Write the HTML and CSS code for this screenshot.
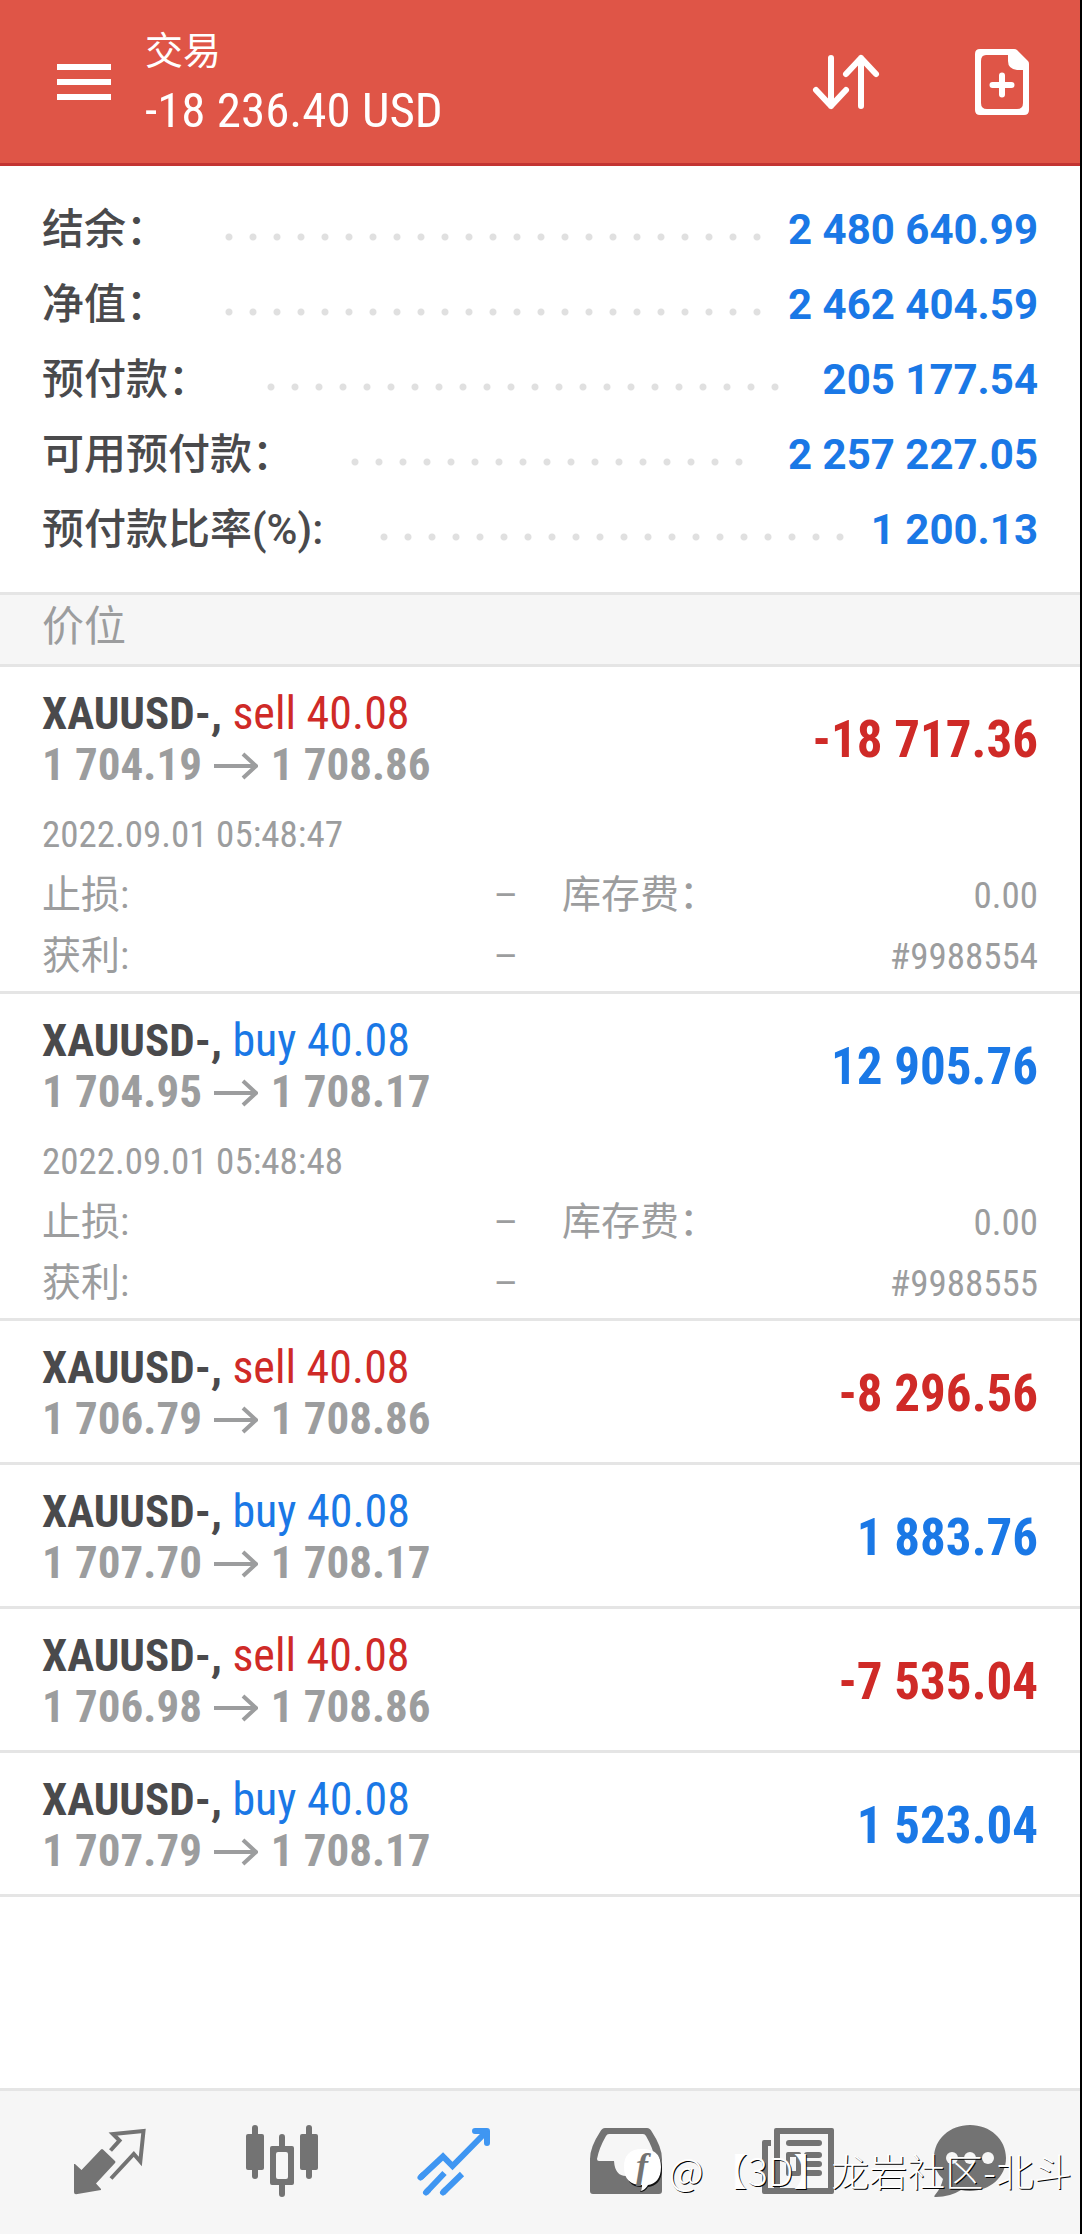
FILE: index.html
```html
<!DOCTYPE html>
<html lang="zh-CN">
<head>
<meta charset="utf-8">
<meta name="viewport" content="width=device-width, initial-scale=1">
<title>交易</title>
<link rel="stylesheet" href="styles.css">
</head>
<body>
<div class="app">
  <header class="topbar">
    <button class="icon-button menu-button" type="button" aria-label="菜单">
      <svg width="54" height="54" viewBox="0 0 54 54"><path d="M0 12h54M0 27h54M0 42h54" stroke="currentColor" stroke-width="6"/></svg>
    </button>
    <div class="heading">
      <h1 class="heading-title">交易</h1>
      <p class="heading-balance">-18 236.40 USD</p>
    </div>
    <button class="icon-button" type="button" aria-label="排序">
      <svg width="72" height="72" viewBox="0 0 72 72" fill="none" stroke="currentColor" stroke-width="6" stroke-linecap="round" stroke-linejoin="round"><path d="M21 12v48M6 44l15 16 15-16M51 60V12M36 28l15-16 15 16"/></svg>
    </button>
    <button class="icon-button" type="button" aria-label="新订单">
      <svg width="54" height="72" viewBox="0 0 54 72"><path fill="currentColor" fill-rule="evenodd" d="M5 3h34q2 0 3 1l11 11q1 1 1 3v46q0 5-5 5H5q-5 0-5-5V8q0-5 5-5zm6 6q-5 0-5 6v42q0 6 6 6h30q6 0 6-6V24h-6q-9-1-9-9V9z"/><path d="M27 29.500v19M17.500 39h19" stroke="currentColor" stroke-width="6" stroke-linecap="round"/></svg>
    </button>
  </header>

  <main class="content">
    <dl class="summary">
      <div class="summary-row"><dt>结余&#xFF1A;</dt><dd class="dots"></dd><dd class="summary-value">2 480 640.99</dd></div>
      <div class="summary-row"><dt>净值&#xFF1A;</dt><dd class="dots"></dd><dd class="summary-value">2 462 404.59</dd></div>
      <div class="summary-row"><dt>预付款&#xFF1A;</dt><dd class="dots"></dd><dd class="summary-value">205 177.54</dd></div>
      <div class="summary-row"><dt>可用预付款&#xFF1A;</dt><dd class="dots"></dd><dd class="summary-value">2 257 227.05</dd></div>
      <div class="summary-row"><dt>预付款比率(%):</dt><dd class="dots"></dd><dd class="summary-value">1 200.13</dd></div>
    </dl>

    <h2 class="section-title">价位</h2>

    <ul class="positions">
      <li class="position">
        <div class="position-main">
          <div>
            <p class="deal">XAUUSD-, <span class="side sell">sell 40.08</span></p>
            <p class="prices">1 704.19 <svg class="arrow" viewBox="0 0 44 28"><path d="M0 14h42M29 2l13 12-13 12"/></svg> 1 708.86</p>
          </div>
          <p class="profit sell">-18 717.36</p>
        </div>
        <div class="details">
          <p class="time">2022.09.01 05:48:47</p>
          <dl class="detail-grid">
            <div class="detail"><dt>止损:</dt><dd class="empty">–</dd></div>
            <div class="detail"><dt>库存费&#xFF1A;</dt><dd>0.00</dd></div>
            <div class="detail"><dt>获利:</dt><dd class="empty">–</dd></div>
            <div class="detail"><dt></dt><dd>#9988554</dd></div>
          </dl>
        </div>
      </li>
      <li class="position">
        <div class="position-main">
          <div>
            <p class="deal">XAUUSD-, <span class="side buy">buy 40.08</span></p>
            <p class="prices">1 704.95 <svg class="arrow" viewBox="0 0 44 28"><path d="M0 14h42M29 2l13 12-13 12"/></svg> 1 708.17</p>
          </div>
          <p class="profit buy">12 905.76</p>
        </div>
        <div class="details">
          <p class="time">2022.09.01 05:48:48</p>
          <dl class="detail-grid">
            <div class="detail"><dt>止损:</dt><dd class="empty">–</dd></div>
            <div class="detail"><dt>库存费&#xFF1A;</dt><dd>0.00</dd></div>
            <div class="detail"><dt>获利:</dt><dd class="empty">–</dd></div>
            <div class="detail"><dt></dt><dd>#9988555</dd></div>
          </dl>
        </div>
      </li>
      <li class="position">
        <div class="position-main">
          <div>
            <p class="deal">XAUUSD-, <span class="side sell">sell 40.08</span></p>
            <p class="prices">1 706.79 <svg class="arrow" viewBox="0 0 44 28"><path d="M0 14h42M29 2l13 12-13 12"/></svg> 1 708.86</p>
          </div>
          <p class="profit sell">-8 296.56</p>
        </div>
      </li>
      <li class="position">
        <div class="position-main">
          <div>
            <p class="deal">XAUUSD-, <span class="side buy">buy 40.08</span></p>
            <p class="prices">1 707.70 <svg class="arrow" viewBox="0 0 44 28"><path d="M0 14h42M29 2l13 12-13 12"/></svg> 1 708.17</p>
          </div>
          <p class="profit buy">1 883.76</p>
        </div>
      </li>
      <li class="position">
        <div class="position-main">
          <div>
            <p class="deal">XAUUSD-, <span class="side sell">sell 40.08</span></p>
            <p class="prices">1 706.98 <svg class="arrow" viewBox="0 0 44 28"><path d="M0 14h42M29 2l13 12-13 12"/></svg> 1 708.86</p>
          </div>
          <p class="profit sell">-7 535.04</p>
        </div>
      </li>
      <li class="position">
        <div class="position-main">
          <div>
            <p class="deal">XAUUSD-, <span class="side buy">buy 40.08</span></p>
            <p class="prices">1 707.79 <svg class="arrow" viewBox="0 0 44 28"><path d="M0 14h42M29 2l13 12-13 12"/></svg> 1 708.17</p>
          </div>
          <p class="profit buy">1 523.04</p>
        </div>
      </li>
    </ul>
  </main>

  <nav class="tabs">
    <a class="tab" href="#quotes" aria-label="行情">
      <svg width="80" height="80" viewBox="0 0 80 80"><path fill="none" stroke="currentColor" stroke-width="4" d="M40.500 30.500l9-10L43 14l30.500-3-3.200 30.500-6.500-7.500L41 58.500"/><path fill="currentColor" d="M31 29.500q1-1 2 0L45 41q1 1 0 2L26 63.500l5 5.500v1L6 74.300q-2 0-2-2V44h1l6.500 6z"/></svg>
    </a>
    <a class="tab" href="#chart" aria-label="图表">
      <svg width="80" height="80" viewBox="0 0 80 80" fill="currentColor"><rect x="4" y="14" width="18" height="36" rx="2"/><rect x="10" y="5" width="6" height="54" rx="3"/><rect x="58" y="14" width="18" height="36" rx="2"/><rect x="64" y="5" width="6" height="54" rx="3"/><path d="M37 26h6v-9q0-3-3-3t-3 3zM37 65h6v9q0 3-3 3t-3-3z"/><path fill-rule="evenodd" d="M30 26h20q2 0 2 2v35q0 2-2 2H30q-2 0-2-2V28q0-2 2-2zm6 6q-2 0-2 2v23q0 2 2 2h8q2 0 2-2V34q0-2-2-2z"/></svg>
    </a>
    <a class="tab tab-active" href="#trade" aria-label="交易" aria-current="page">
      <svg width="80" height="80" viewBox="0 0 80 80" fill="none" stroke="currentColor" stroke-width="6"><path stroke-linecap="round" stroke-linejoin="round" d="M61 11h12v12"/><path stroke-linejoin="miter" d="M6.500 57.500L29 36.500l9.500 9.500L73 11"/><path stroke-linecap="round" d="M6.500 57.500l2-2M12 72.500l2-2M29 72.500l2-2"/><path d="M12 72.500L30.500 53M29 72.500L48 54"/></svg>
    </a>
    <a class="tab" href="#history" aria-label="历史">
      <svg width="80" height="80" viewBox="0 0 80 80"><path fill="currentColor" fill-rule="evenodd" d="M19 8h42q3 0 5 4 10 15 10 27v32q0 3-3 3H7q-3 0-3-3V39Q4 27 14 12q2-4 5-4zm4 6q-2 0-3 2-7 12-9 23 0 2 2 2h15q1 15 12 15t12-15h15q2 0 2-2-2-11-9-23-1-2-3-2z"/></svg>
    </a>
    <a class="tab" href="#news" aria-label="新闻">
      <svg width="80" height="80" viewBox="0 0 80 80" fill="currentColor"><path fill-rule="evenodd" d="M18 8h56q2 0 2 2v62q0 2-2 2H6q-2 0-2-2V22q0-2 2-2h7v6h-3v42h6V10q0-2 2-2zm4 6v54h48V14z"/><rect x="28" y="20" width="36" height="6" rx="3"/><path fill-rule="evenodd" d="M30 32h11q2 0 2 2v20q0 2-2 2H30q-2 0-2-2V34q0-2 2-2zm2 5v14h6V37z"/><rect x="46" y="32" width="18" height="6" rx="3"/><rect x="46" y="41" width="18" height="6" rx="3"/><rect x="46" y="50" width="18" height="6" rx="3"/></svg>
    </a>
    <a class="tab" href="#messages" aria-label="消息">
      <svg width="80" height="80" viewBox="0 0 80 80"><path fill="currentColor" d="M40 5c20 0 36 14 36 33S60 71 40 71q-5 0-9-1-11 7-25 7-3 0-1-2 6-7 8-16Q4 51 4 38C4 19 20 5 40 5z"/><g fill="#f6f6f6"><circle cx="22" cy="38" r="6"/><circle cx="40" cy="38" r="6"/><circle cx="58" cy="38" r="6"/></g></svg>
    </a>
  </nav>

  <div class="watermark">
    <svg class="watermark-logo" width="40" height="44" viewBox="0 0 40 44"><path fill="#111" d="M20 3c14 0 19 7 19 18 0 12-6 17-14 18q-3 5-8 5 2-2 2-5C8 39 3 33 3 21 3 10 8 3 20 3z"/><path fill="#fff" d="M19 1c14 0 19 7 19 18 0 12-6 17-13 18q-3 5-7 6 1-3 1-6C7 37 1 31 1 19 1 8 6 1 19 1z"/><text class="watermark-f" x="13" y="30">f</text></svg>
    <span>@</span>
    <span>【3D】龙岩社区-北斗</span>
  </div>
</div>
</body>
</html>
```
FILE: styles.css
```css
:root {
  --blue: #1a78e6;
  --red: #cf2a27;
  --dark: #4a4a4c;
  --gray: #9c9d9e;
  --line: #e5e5e5;
  --panel: #f6f6f6;
  --condensed: "Roboto Condensed", "Liberation Sans Narrow", Roboto, "Noto Sans CJK SC", sans-serif;
  --regular: Roboto, "Noto Sans CJK SC", sans-serif;
}

* {
  box-sizing: border-box;
  margin: 0;
  padding: 0;
}

body {
  background: #fff;
  color: var(--dark);
  font-family: var(--condensed);
}

.app {
  position: relative;
  display: flex;
  flex-direction: column;
  min-height: 100vh;
  border-right: 2px solid #000;
}

.topbar {
  display: flex;
  align-items: center;
  padding: 0 51px 0 57px;
  height: 166px;
  background: #df5547;
  border-bottom: 3px solid #c33432;
  color: #fff;
}

.icon-button {
  display: flex;
  border: 0;
  background: none;
  color: inherit;
}

.icon-button + .icon-button {
  margin-left: 93px;
}

.heading {
  flex: 1;
  margin-left: 34px;
  padding-top: 6px;
}

.heading-title {
  font-size: 38px;
  font-weight: 400;
  line-height: 52px;
}

.heading-balance {
  font-size: 49px;
  line-height: 68px;
}

.content {
  flex: 1;
}

.summary {
  padding: 26px 42px 25px;
  font-family: var(--regular);
  font-size: 42px;
  line-height: 75px;
}

.summary-row {
  display: flex;
}

.summary-row dt {
  font-weight: 500;
}

.summary-value {
  color: var(--blue);
  font-weight: 700;
}

.dots {
  flex: 1;
  margin: 0 8px 0 57px;
}

.dots::before {
  content: "";
  display: block;
  width: round(down, 100%, 24px);
  height: 90px;
  margin-bottom: -15px;
  background: radial-gradient(circle at 4px 50%, #e0e0e0 3px, transparent 4px) 0 0 / 24px 100% repeat-x;
}

.section-title {
  padding: 0 42px 6px;
  background: var(--panel);
  border: solid var(--line);
  border-width: 3px 0;
  color: var(--gray);
  font-size: 42px;
  font-weight: 400;
  line-height: 63px;
}

.positions {
  list-style: none;
}

.position {
  padding: 21px 42px 0;
  border-bottom: 3px solid var(--line);
}

.position-main {
  display: flex;
  align-items: center;
  justify-content: space-between;
  padding-bottom: 14px;
}

.position-main:only-child {
  padding-bottom: 18px;
}

.deal,
.prices {
  font-size: 45px;
  font-weight: 700;
  line-height: 51px;
}

.prices {
  color: var(--gray);
}

.side {
  font-size: 46px;
  font-weight: 400;
}

.sell {
  color: var(--red);
}

.buy {
  color: var(--blue);
}

.arrow {
  width: 44px;
  height: 28px;
  margin: 0 2px;
  fill: none;
  stroke: currentColor;
  stroke-width: 4px;
}

.profit {
  font-size: 51px;
  font-weight: 700;
}

.details {
  padding-bottom: 4px;
  color: var(--gray);
  font-size: 37px;
  line-height: 61px;
}

.detail-grid {
  display: grid;
  grid-template-columns: 1fr 1fr;
  column-gap: 44px;
}

.detail {
  display: flex;
  justify-content: space-between;
}

.detail dt {
  font-size: 39px;
}

.detail .empty {
  font-family: var(--regular);
}

.tabs {
  display: grid;
  grid-template-columns: repeat(6, 1fr);
  padding: 29px 24px 34px;
  background: var(--panel);
  border-top: 3px solid var(--line);
}

.tab {
  display: flex;
  justify-content: center;
  color: #737373;
}

.tab-active {
  color: #3f96f2;
}

.watermark {
  position: absolute;
  right: 8px;
  bottom: 36px;
  display: flex;
  align-items: center;
  gap: 6px;
  color: #fff;
  font-family: "Noto Sans CJK SC", sans-serif;
  font-size: 38px;
  font-weight: 300;
  line-height: 56px;
  text-shadow: 1px 1px 0 #000;
}

.watermark-logo {
  overflow: visible;
}

.watermark-f {
  fill: #737373;
  font-family: "Liberation Serif", serif;
  font-size: 36px;
  font-style: italic;
  font-weight: 700;
  text-shadow: none;
}
```
